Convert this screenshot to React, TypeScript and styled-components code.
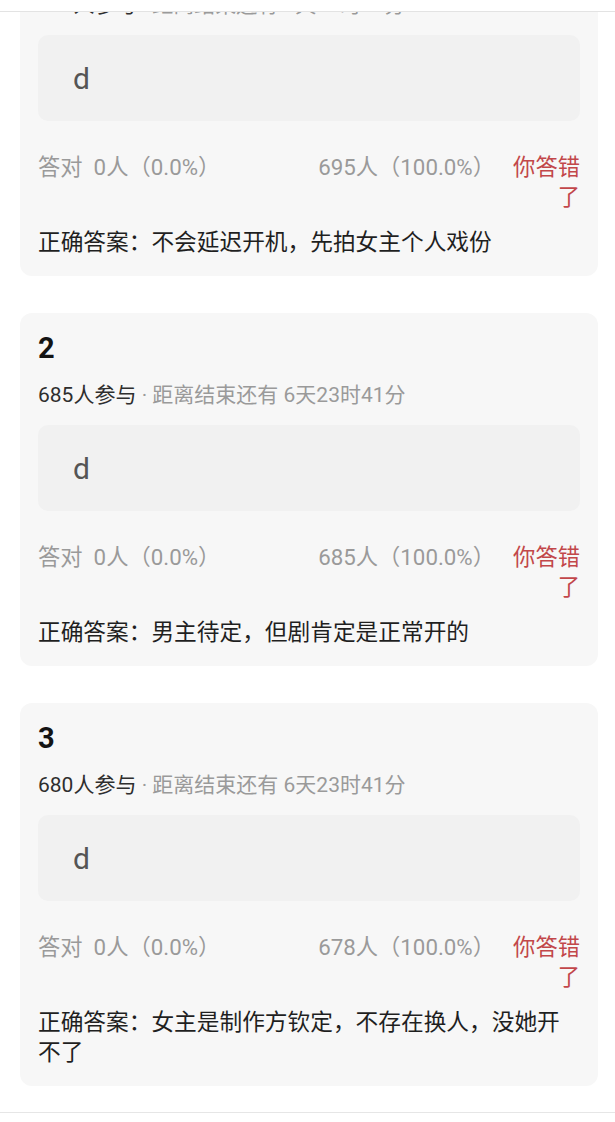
import React from "react";
import styled, { createGlobalStyle } from "styled-components";

const GlobalStyle = createGlobalStyle`
  html, body {
    margin: 0;
    padding: 0;
    background: #ffffff;
  }
  body {
    font-family: Roboto, "Noto Sans CJK SC", sans-serif;
    -webkit-font-smoothing: antialiased;
  }
  * {
    box-sizing: border-box;
  }
`;

const Page = styled.div`
  width: 615px;
  height: 1122px;
  display: flex;
  flex-direction: column;
  overflow: hidden;
  background: #ffffff;
`;

const TopBar = styled.header`
  flex: 0 0 12px;
  background: #ffffff;
  border-bottom: 1px solid #e3e3e3;
`;

const Feed = styled.main`
  flex: 1 1 auto;
  overflow: hidden;
`;

/* the list is scrolled part-way: the first card's head sits above the fold */
const List = styled.div`
  margin-top: -89px;
  padding: 0 17px 0 20px;
  display: flex;
  flex-direction: column;
  gap: 37px;
`;

const BottomBar = styled.footer`
  flex: 0 0 10px;
  background: #ffffff;
  border-top: 1px solid #e6e6e6;
`;

const Card = styled.article`
  background: #f7f7f7;
  border-radius: 12px;
  padding: 18px 18px 18px;
  display: flex;
  flex-direction: column;
`;

const Title = styled.h3`
  margin: 0;
  font-size: 29px;
  line-height: 35px;
  font-weight: 700;
  color: #141414;
`;

const Meta = styled.div`
  margin-top: 15px;
  font-size: 21px;
  line-height: 28px;
  color: #9a9a9a;
  white-space: nowrap;
`;

const Joined = styled.span`
  color: #2e2e2e;
`;

const Choice = styled.div`
  margin-top: 16px;
  height: 86px;
  border-radius: 10px;
  background: #f1f1f1;
  display: flex;
  align-items: center;
  padding-left: 35px;
  font-size: 30px;
  color: #555555;
`;

const Stats = styled.div`
  margin-top: 31px;
  display: flex;
  justify-content: space-between;
  align-items: flex-start;
  font-size: 22.3px;
  line-height: 30px;
  color: #9a9a9a;
`;

const StatLabel = styled.span`
  margin-right: 11px;
`;

const WrongGroup = styled.div`
  display: flex;
  align-items: flex-start;
  gap: 17px;
`;

const Verdict = styled.span`
  width: 68px;
  text-align: right;
  color: #c2474a;
`;

const Answer = styled.p`
  margin: 16px 0 0;
  font-size: 22.7px;
  line-height: 30px;
  color: #1f1f1f;
`;

type Poll = {
  no: number;
  joined: number;
  remain: string;
  choice: string;
  right: number;
  rightPct: string;
  wrong: number;
  wrongPct: string;
  answer: string;
};

const polls: Poll[] = [
  {
    no: 1,
    joined: 695,
    remain: "6天23时40分",
    choice: "d",
    right: 0,
    rightPct: "0.0%",
    wrong: 695,
    wrongPct: "100.0%",
    answer: "不会延迟开机，先拍女主个人戏份",
  },
  {
    no: 2,
    joined: 685,
    remain: "6天23时41分",
    choice: "d",
    right: 0,
    rightPct: "0.0%",
    wrong: 685,
    wrongPct: "100.0%",
    answer: "男主待定，但剧肯定是正常开的",
  },
  {
    no: 3,
    joined: 680,
    remain: "6天23时41分",
    choice: "d",
    right: 0,
    rightPct: "0.0%",
    wrong: 678,
    wrongPct: "100.0%",
    answer: "女主是制作方钦定，不存在换人，没她开不了",
  },
];

function PollCard({ poll }: { poll: Poll }) {
  return (
    <Card>
      <Title>{poll.no}</Title>
      <Meta>
        <Joined>{poll.joined}人参与</Joined> · 距离结束还有 {poll.remain}
      </Meta>
      <Choice>{poll.choice}</Choice>
      <Stats>
        <span>
          <StatLabel>答对</StatLabel>
          {poll.right}人（{poll.rightPct}）
        </span>
        <WrongGroup>
          <span>
            {poll.wrong}人（{poll.wrongPct}）
          </span>
          <Verdict>你答错了</Verdict>
        </WrongGroup>
      </Stats>
      <Answer>正确答案：{poll.answer}</Answer>
    </Card>
  );
}

export default function App() {
  return (
    <>
      <GlobalStyle />
      <Page>
        <TopBar />
        <Feed>
          <List>
            {polls.map((p) => (
              <PollCard key={p.no} poll={p} />
            ))}
          </List>
        </Feed>
        <BottomBar />
      </Page>
    </>
  );
}
